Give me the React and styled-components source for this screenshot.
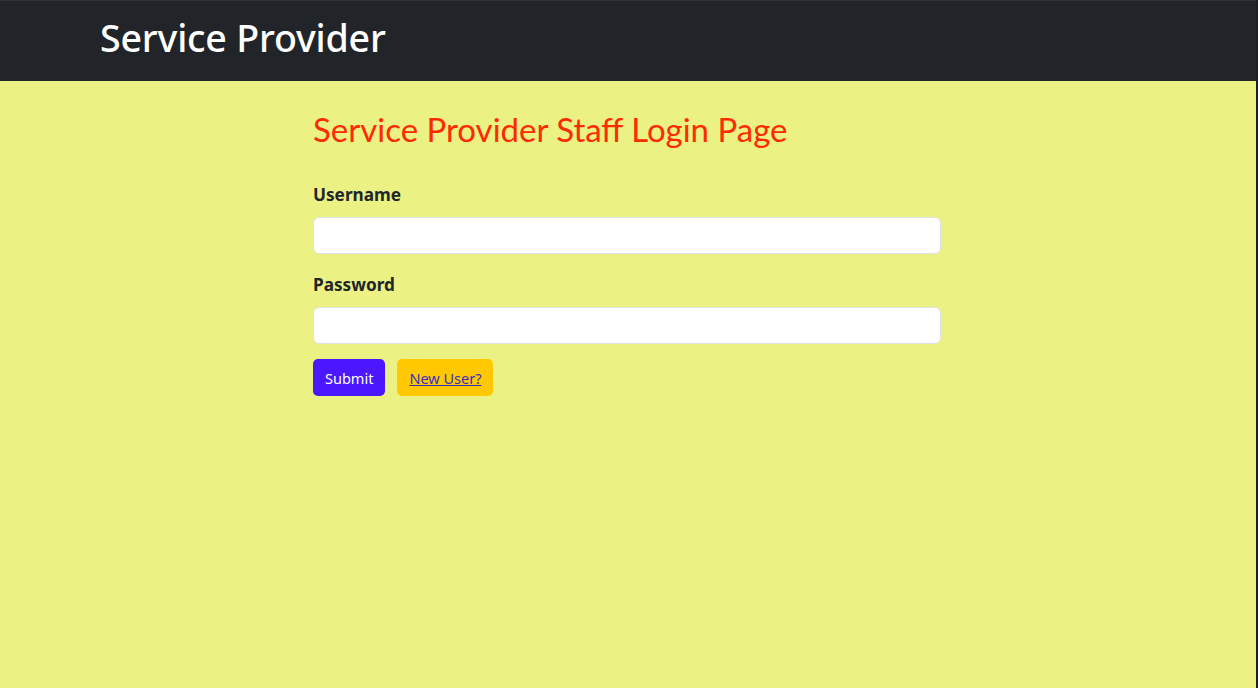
import React from "react";
import styled, { createGlobalStyle } from "styled-components";

const GlobalStyle = createGlobalStyle`
  html, body { margin: 0; padding: 0; height: 100%; }
  body {
    font-family: "Noto Sans", "Open Sans", sans-serif;
    background: #ebf283;
  }
  #root { min-height: 100%; }
`;

const Page = styled.div`
  min-height: 688px;
  box-sizing: border-box;
  background: #ebf283;
  border-right: 2px solid #1d1f22;
  display: flex;
  flex-direction: column;
`;

const NavBar = styled.header`
  height: 81px;
  box-sizing: border-box;
  background: #212529;
  border-top: 1px solid #2c3038;
  display: flex;
  align-items: center;
  padding-left: 100px;
`;

const Brand = styled.h1`
  margin: 0;
  color: #ffffff;
  font-family: "Noto Sans", sans-serif;
  font-weight: 500;
  font-size: 37.6px;
  line-height: 1;
  letter-spacing: -0.2px;
  padding-bottom: 6px;
`;

const Main = styled.main`
  width: 628px;
  margin: 0 auto;
  padding-top: 28px;
  transform: translateX(-1px);
`;

const Title = styled.h2`
  margin: 0 0 33px 0;
  color: #ff2a00;
  font-family: "Lato", sans-serif;
  font-weight: 400;
  font-size: 33px;
  line-height: 40px;
`;

const Form = styled.form`
  display: flex;
  flex-direction: column;
`;

const Field = styled.div`
  display: flex;
  flex-direction: column;
  margin-bottom: ${(p) => (p.$last ? "15px" : "18px")};
`;

const Label = styled.label`
  color: #212529;
  font-weight: 700;
  font-size: 17.2px;
  line-height: 26px;
  margin-bottom: 9px;
`;

const Input = styled.input`
  height: 37px;
  box-sizing: border-box;
  background: #ffffff;
  border: 1px solid #dee2e6;
  border-radius: 6px;
  padding: 6px 12px;
  font-size: 16px;
  font-family: inherit;
  outline: none;
`;

const Actions = styled.div`
  display: flex;
  gap: 12px;
  align-items: center;
`;

const Button = styled.button`
  height: 37px;
  box-sizing: border-box;
  border: none;
  border-radius: 5px;
  padding: 0 12px;
  font-family: inherit;
  font-size: 14.5px;
  cursor: pointer;
  background: ${(p) => (p.$variant === "warning" ? "#ffc800" : "#4a17ff")};
  color: ${(p) => (p.$variant === "warning" ? "#3a2fc4" : "#ffffff")};
`;

const LinkText = styled.a`
  color: #3a2fc4;
  text-decoration: underline;
`;

export default function App() {
  return (
    <>
      <GlobalStyle />
      <Page>
        <NavBar>
          <Brand>Service Provider</Brand>
        </NavBar>
        <Main>
          <Title>Service Provider Staff Login Page</Title>
          <Form onSubmit={(e) => e.preventDefault()}>
            <Field>
              <Label htmlFor="username">Username</Label>
              <Input id="username" type="text" />
            </Field>
            <Field $last>
              <Label htmlFor="password">Password</Label>
              <Input id="password" type="password" />
            </Field>
            <Actions>
              <Button type="submit">Submit</Button>
              <Button type="button" $variant="warning">
                <LinkText href="#">New User?</LinkText>
              </Button>
            </Actions>
          </Form>
        </Main>
      </Page>
    </>
  );
}
